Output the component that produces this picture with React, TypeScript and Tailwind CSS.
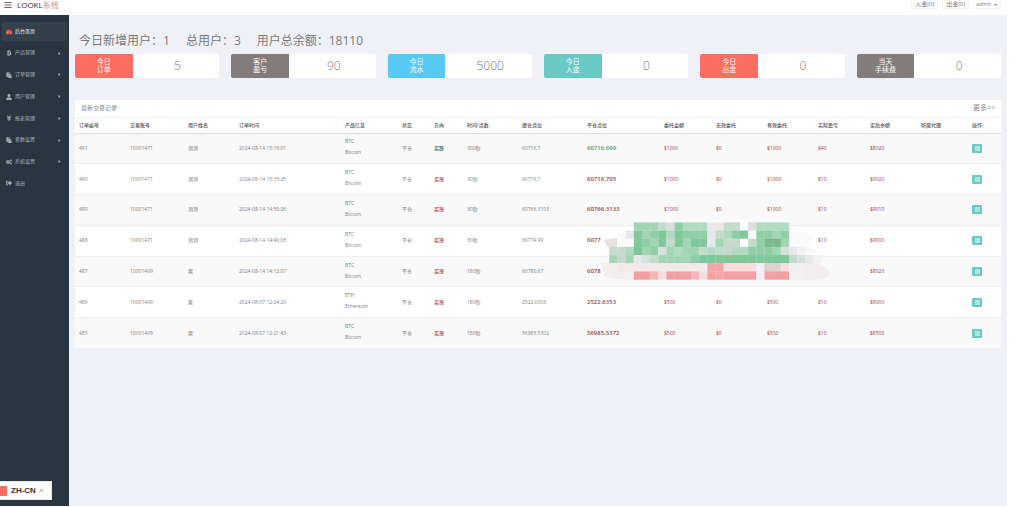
import { useState } from "react"
import type { IconType } from "react-icons"
import {
  FaBars, FaBtc, FaCaretDown, FaCaretRight, FaCogs, FaPaste,
  FaRegListAlt, FaSignOutAlt, FaTachometerAlt, FaUser, FaYenSign,
} from "react-icons/fa"
import { ChevronUp } from "lucide-react"

const menus: { name: string, icon: IconType, sub: boolean }[] = [
  { name: '后台首页', icon: FaTachometerAlt, sub: false },
  { name: '产品管理', icon: FaBtc, sub: true },
  { name: '订单管理', icon: FaPaste, sub: true },
  { name: '用户管理', icon: FaUser, sub: true },
  { name: '报表管理', icon: FaYenSign, sub: true },
  { name: '参数设置', icon: FaPaste, sub: true },
  { name: '系统设置', icon: FaCogs, sub: true },
  { name: '退出', icon: FaSignOutAlt, sub: false },
]

const stats = [
  { label: ['今日', '订单'], value: '5', color: 'bg-[#fc6e61]' },
  { label: ['客户', '盈亏'], value: '90', color: 'bg-[#827c7c]' },
  { label: ['今日', '流水'], value: '5000', color: 'bg-[#58c9f3]' },
  { label: ['今日', '入金'], value: '0', color: 'bg-[#6ac8c5]' },
  { label: ['今日', '出金'], value: '0', color: 'bg-[#fc6e61]' },
  { label: ['当天', '手续费'], value: '0', color: 'bg-[#827c7c]' },
]

const columns = [
  { title: '订单编号', width: 'w-[51px]' },
  { title: '交易账号', width: 'w-[58px]' },
  { title: '用户姓名', width: 'w-[51px]' },
  { title: '订单时间', width: 'w-[106px]' },
  { title: '产品信息', width: 'w-[57px]' },
  { title: '状态', width: 'w-[32px]' },
  { title: '方向', width: 'w-[33px]' },
  { title: '时间/点数', width: 'w-[55px]' },
  { title: '建仓点位', width: 'w-[65px]' },
  { title: '平仓点位', width: 'w-[77px]' },
  { title: '委托金额', width: 'w-[52px]' },
  { title: '无效委托', width: 'w-[51px]' },
  { title: '有效委托', width: 'w-[51px]' },
  { title: '实际盈亏', width: 'w-[52px]' },
  { title: '买后余额', width: 'w-[51px]' },
  { title: '所属代理', width: 'w-[51px]' },
  { title: '操作', width: 'w-[33px]' },
]

const orders = [
  { id: 491, account: '10001471', user: '测测', time: '2024-08-14 15:16:01', code: 'BTC', product: 'Bitcoin', up: false, period: '300秒', open: '60716.7', close: '60716.699', amount: '$1000', invalid: '$0', valid: '$1000', profit: '$40', balance: '$8020' },
  { id: 490, account: '10001471', user: '测测', time: '2024-08-14 15:15:25', code: 'BTC', product: 'Bitcoin', up: true, period: '30秒', open: '60716.7', close: '60716.705', amount: '$1000', invalid: '$0', valid: '$1000', profit: '$10', balance: '$9020' },
  { id: 489, account: '10001471', user: '测测', time: '2024-08-14 14:50:26', code: 'BTC', product: 'Bitcoin', up: true, period: '30秒', open: '60766.3103', close: '60766.3133', amount: '$1000', invalid: '$0', valid: '$1000', profit: '$10', balance: '$9010' },
  { id: 488, account: '10001471', user: '测测', time: '2024-08-14 14:40:03', code: 'BTC', product: 'Bitcoin', up: true, period: '30秒', open: '60774.99', close: '6077', amount: '', invalid: '', valid: '', profit: '$10', balance: '$9000' },
  { id: 487, account: '10001469', user: '露', time: '2024-08-14 14:12:07', code: 'BTC', product: 'Bitcoin', up: true, period: '180秒', open: '60780.67', close: '6078', amount: '', invalid: '', valid: '', profit: '', balance: '$8020' },
  { id: 486, account: '10001469', user: '露', time: '2024-08-07 12:24:20', code: 'ETH', product: 'Ethereum', up: true, period: '180秒', open: '2522.6303', close: '2522.6353', amount: '$500', invalid: '$0', valid: '$500', profit: '$10', balance: '$8000' },
  { id: 485, account: '10001469', user: '露', time: '2024-08-07 12:21:43', code: 'BTC', product: 'Bitcoin', up: true, period: '180秒', open: '56985.5302', close: '56985.5372', amount: '$500', invalid: '$0', valid: '$500', profit: '$10', balance: '$8500' },
]

// one letter per mosaic block, '.' is empty
const mosaic = [
  '...cccegbdddwweekgdddd',
  '..wacbadabbbwedbakbbcb',
  '...abcaeacaawceekebhhc',
  'eedacbgcdccedeeddbbbcgwx',
  'cecwgeccccbaaaaaaaaaaaegwx',
  'xyyyyyyyyyyyppqqqqxzzqxx',
  '..xrrsqrrrsqrprrrrxrrrxx',
]

const palette: Record<string, string> = {
  a: '#80c799', b: '#90cea6', c: '#a3d5b5', d: '#b1dac0', e: '#c4dbcc',
  g: '#d7e0da', h: '#7cb98f', k: '#fbfbfb', w: '#e8e7eb', x: '#f3f0f1',
  y: '#f2eae9', z: '#dfcfcf', p: '#f4a5a7', q: '#f5dedd', r: '#f4a0a3',
  s: '#f5b7b8',
}

function Mosaic() {
  return <svg className="absolute left-[525px] top-[122px]" width="235" height="60" viewBox="0 0 235 60" aria-hidden="true">
    <path d="M4 17C14 15 18 10 32 9L198 8C214 12 214 18 211 24C220 32 219 38 216 42L9 42C7 34 9 28 4 26Z" fill="#fafafb" />
    <path d="M2 41H216C226 43 231 49 229 55C220 59 200 58 190 57H30C16 58 8 56 3 53C7 48 0 46 2 41Z" fill="#f3eeed" />
    <path d="M4 18L17 16V25H8Z" fill="#ecdfdf" />
    {mosaic.map((line, y) => line.split('').map((ch, x) => palette[ch] &&
      <rect key={x + '-' + y} x={9.3 + x * 8.17} y={0.4 + y * 8.17} width="8.3" height="8.3" fill={palette[ch]} />
    ))}
  </svg>
}

function Header() {
  return <header className="h-[15px] shrink-0">
    <div className="h-[9px] flex items-center pl-1 pr-[23px]">
      <button aria-label="菜单" className="text-[8px] text-[#666]"><FaBars /></button>
      <a href="#" className="ml-[5px] text-[8px] leading-[9px] text-[#333]">LOOKL<span className="text-[#c98f8f]">系统</span></a>
      <div className="ml-auto flex gap-1 text-[6px] leading-[6px] text-[#777]">
        <button className="h-[9px] px-[3px] border border-t-0 border-gray-100 rounded-b-xs">入金(0)</button>
        <button className="h-[9px] px-[3px] border border-t-0 border-gray-100 rounded-b-xs">出金(0)</button>
        <button className="h-[9px] px-[2px] border border-t-0 border-gray-100 rounded-b-xs flex items-center gap-[2px] text-[5px]">admin <FaCaretDown /></button>
      </div>
    </div>
  </header>
}

function Sidebar() {
  const [active, setActive] = useState('后台首页')

  return <nav className="w-[69px] shrink-0 bg-[#2a3542] pt-[7px] px-[2px]">
    <ul className="h-[171px] flex flex-col justify-between">
      {menus.map(({ name, icon: Icon, sub }) => {
        const on = active === name
        return <li key={name}>
          <a
            href="#"
            onClick={() => setActive(name)}
            className={`h-[19px] flex items-center rounded-xs pl-[4px] pr-[5px] text-[5px] ${on ? 'bg-[#35404d] text-white' : 'text-[#aeb2b7]'}`}
          >
            <Icon className={`text-[6px] mr-[3px] ${on ? 'text-[#ff6c60]' : ''}`} />
            {name}
            {sub && <FaCaretRight className="ml-auto text-[5px]" />}
          </a>
        </li>
      })}
    </ul>
  </nav>
}

function Orders() {
  return <section className="relative mt-[22px] bg-white rounded-xs overflow-hidden">
    <div className="h-[18px] flex items-center justify-between px-[6px] border-b border-[#eff2f7] text-[6px] text-[#888]">
      <h2>最新交易记录</h2>
      <a href="#" className="text-[7px]">更多&gt;&gt;</a>
    </div>
    <table className="w-full h-[230px] table-fixed text-left text-[5px] leading-[11px] text-[#808080]">
      <colgroup>
        {columns.map(c => <col key={c.title} className={c.width} />)}
      </colgroup>
      <thead>
        <tr className="h-[15px] border-b border-[#ddd] text-[#555]">
          {columns.map(c => <th key={c.title} className="px-1 font-medium whitespace-nowrap">{c.title}</th>)}
        </tr>
      </thead>
      <tbody>
        {orders.map(o => <tr key={o.id} className="border-b border-[#eee] last:border-0 odd:bg-[#f9f9f9]">
          <td className="px-1">{o.id}</td>
          <td className="px-1">{o.account}</td>
          <td className="px-1">{o.user}</td>
          <td className="px-1">{o.time}</td>
          <td className="px-1 pb-[2px]">
            <p>{o.code}</p>
            <p>{o.product}</p>
          </td>
          <td className="px-1">平仓</td>
          <td className={`px-1 font-medium ${o.up ? 'text-[#b5404a]' : 'text-[#2f7a4c]'}`}>{o.up ? '买涨' : '买跌'}</td>
          <td className="px-1">{o.period}</td>
          <td className="px-1">{o.open}</td>
          <td className={`px-1 text-[6px] font-semibold ${o.up ? 'text-[#984048]' : 'text-[#4a9a6c]'}`}>{o.close}</td>
          <td className="px-1 font-medium text-[#a83c44]">{o.amount}</td>
          <td className="px-1 font-medium text-[#a83c44]">{o.invalid}</td>
          <td className="px-1 font-medium text-[#a83c44]">{o.valid}</td>
          <td className="px-1 font-medium text-[#a83c44]">{o.profit}</td>
          <td className="px-1 font-medium text-[#984048]">{o.balance}</td>
          <td className="px-1"></td>
          <td className="px-1">
            <button aria-label="详情" className="w-[10px] h-[9px] flex items-center justify-center rounded-[1px] bg-[#6ac8c5] text-white"><FaRegListAlt /></button>
          </td>
        </tr>)}
      </tbody>
    </table>
    <Mosaic />
  </section>
}

export default function App() {
  return <div className="relative h-screen flex flex-col overflow-hidden bg-white pb-px font-['Open_Sans','Noto_Sans_CJK_SC',sans-serif]">
    <Header />

    <div className="flex-1 flex mr-[17px]">
      <Sidebar />
      <main className="flex-1 min-w-0 bg-[#f0f1f6] px-[6px] pt-[17px]">
        <div className="h-[22px] pl-1 flex gap-4 text-[12px] leading-[18px] text-[#797979]">
          <span>今日新增用户：1</span>
          <span>总用户：3</span>
          <span>用户总余额：18110</span>
        </div>

        <div className="grid grid-cols-6 gap-3">
          {stats.map((s, i) => <div key={i} className="h-6 flex bg-white rounded-xs overflow-hidden">
            <div className={`w-2/5 flex flex-col items-center justify-center text-[7px] leading-[8px] text-white ${s.color}`}>
              {s.label.map(l => <span key={l}>{l}</span>)}
            </div>
            <div className="flex-1 pl-[3px] flex items-center justify-center text-[12px] leading-4 font-light text-[#777]">{s.value}</div>
          </div>)}
        </div>

        <Orders />
      </main>
    </div>

    <button className="absolute left-0 bottom-[7px] h-[19px] w-[52px] flex items-center bg-white border border-gray-200 border-l-0 text-[8px] font-bold text-[#333] font-['Liberation_Sans',sans-serif]">
      <span className="w-[7px] h-[10px] bg-[#fc6e61] mr-1"></span>
      ZH-CN
      <ChevronUp className="ml-[2px] w-[7px] h-[7px]" />
    </button>
  </div>
}
